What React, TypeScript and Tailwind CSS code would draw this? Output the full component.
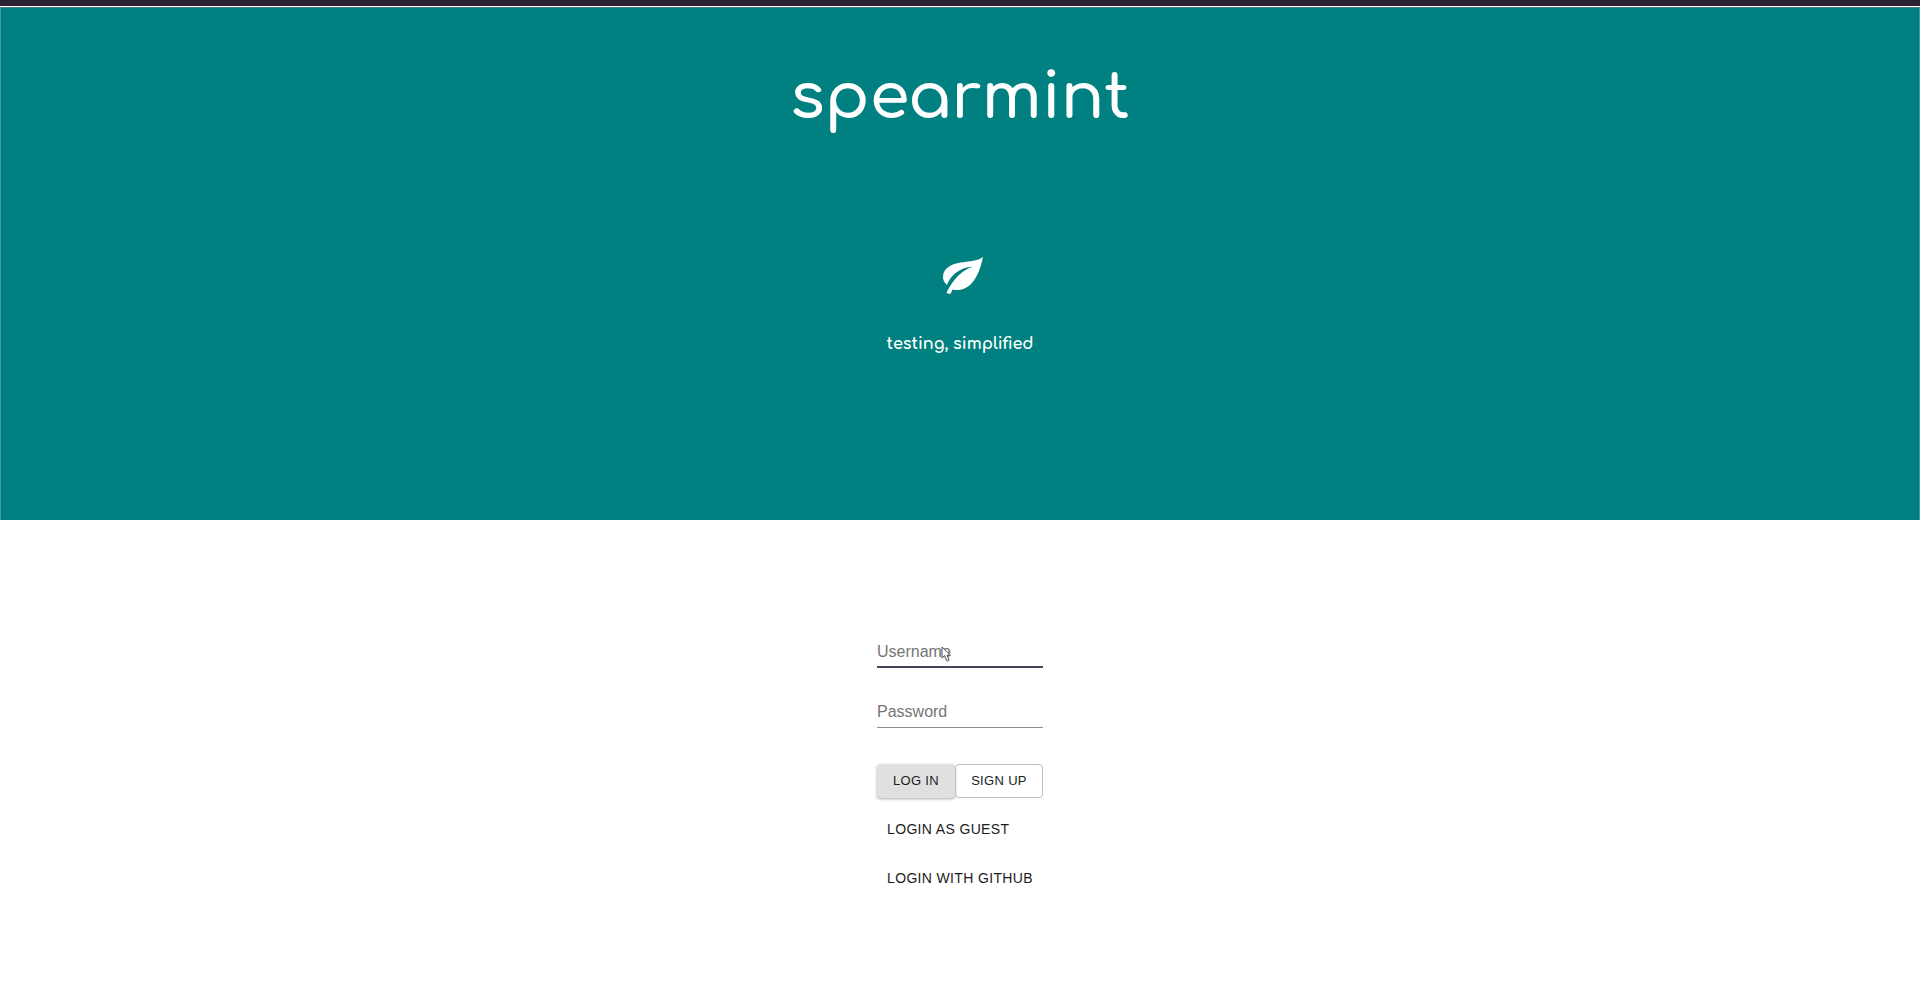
import React, { useState } from 'react';

function LeafIcon() {
  return (
    <svg viewBox="0 0 40 37" className="h-[37px] w-10 fill-white" aria-hidden="true">
      <path d="M40 0C36 3 30 4 22 5C9 6 0 11 0 20C0 23 1.500 26 4 28C7 19 16 10.500 30 9.500C20 12.500 10 22 3.500 35.500C4.500 37 7 37.500 8 36L9.500 32.500C15 34 22 33 28 27C35 20 38 9 40 0Z" />
    </svg>
  );
}

function PointerIcon() {
  return (
    <svg viewBox="0 0 12 17" className="pointer-events-none absolute left-16 top-[10px] h-[17px] w-3 drop-shadow" aria-hidden="true">
      <path d="M1 1V12L3.500 9.500L6 15L8 14L6 9H9.500Z" fill="#fff" stroke="#555" strokeWidth="1" strokeLinejoin="round" />
    </svg>
  );
}

function Field({ id, label, type, active }: { id: string; label: string; type: string; active?: boolean }) {
  const [value, setValue] = useState('');
  return (
    <div className="relative grid">
      <label
        htmlFor={id}
        className={
          value
            ? 'invisible col-start-1 row-start-1 self-center'
            : 'col-start-1 row-start-1 self-center text-base leading-6 text-[#757575]'
        }
      >
        {label}
      </label>
      <input
        id={id}
        type={type}
        value={value}
        onChange={(e) => setValue(e.target.value)}
        className={
          active
            ? 'col-start-1 row-start-1 h-8 w-full border-b-2 border-[#4a4458] bg-transparent text-base outline-none'
            : 'col-start-1 row-start-1 h-8 w-full border-b border-[#8c8c8c] bg-transparent text-base outline-none'
        }
      />
      {active && <PointerIcon />}
    </div>
  );
}

export default function App() {
  return (
    <div className="flex min-h-screen flex-col bg-white font-['Liberation_Sans',Arial,sans-serif] text-[#1c1c1c]">
      <div className="h-[7px] border-b border-white bg-[#2c2133]" />
      <header className="flex h-[513px] flex-col items-center border-x border-t border-x-[#3d9c9c] border-t-[#4f7c80] bg-[#008080] font-[Comfortaa,sans-serif] text-white">
        <h1 className="mt-[50px] text-[64px] font-semibold leading-[80px]">spearmint</h1>
        <div className="mt-[119px] pl-[6px]">
          <LeafIcon />
        </div>
        <p className="mt-[38px] text-base font-bold leading-6">testing, simplified</p>
      </header>
      <main className="flex flex-col items-center pt-[116px]">
        <form className="flex w-[166px] flex-col" onSubmit={(e) => e.preventDefault()}>
          <div className="flex flex-col gap-7">
            <Field id="username" label="Username" type="text" active />
            <Field id="password" label="Password" type="password" />
          </div>
          <div className="mt-9 flex">
            <button type="submit" className="h-[34px] w-[78px] rounded bg-[#e0e0e0] text-[13px] tracking-wide shadow-[0_1px_3px_rgba(0,0,0,0.35)]">LOG IN</button>
            <button type="button" className="h-[34px] flex-1 rounded border border-[#bdbdbd] text-[13px] tracking-wide">SIGN UP</button>
          </div>
          <div className="mt-[13px] flex flex-col items-start gap-[13px] whitespace-nowrap">
            <button type="button" className="h-9 px-[10px] text-sm tracking-wide">LOGIN AS GUEST</button>
            <button type="button" className="h-9 px-[10px] text-sm tracking-wide">LOGIN WITH GITHUB</button>
          </div>
        </form>
      </main>
    </div>
  );
}
